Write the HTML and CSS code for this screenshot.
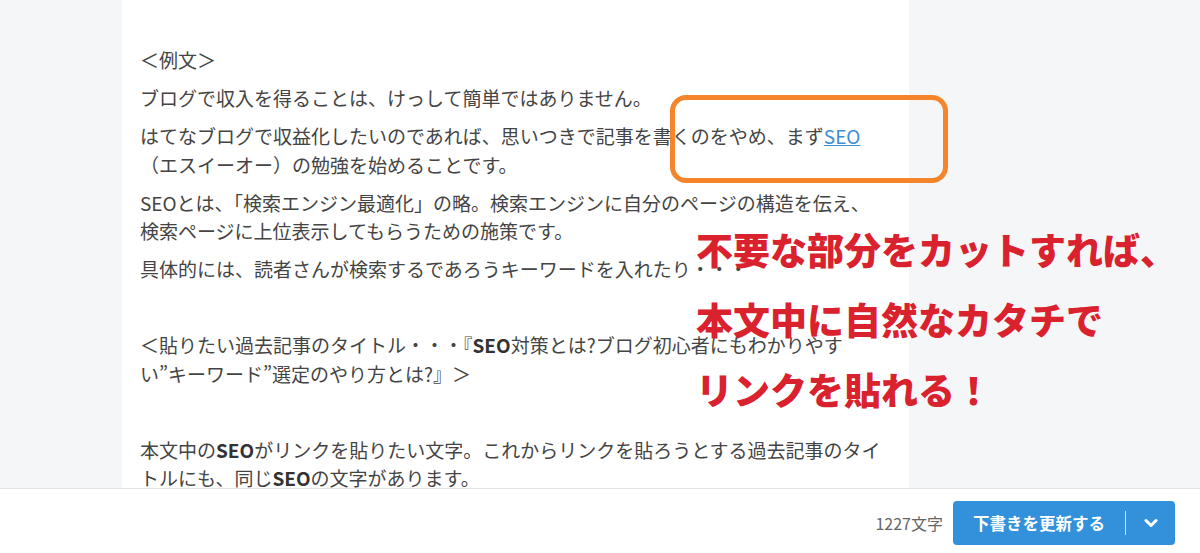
FILE: index.html
```html
<!DOCTYPE html>
<html lang="ja">
<head>
<meta charset="utf-8">
<title>編集</title>
<link rel="stylesheet" href="styles.css">
</head>
<body>
<div class="page">
  <main class="editor-area">
    <article class="editor">
      <p>＜例文＞</p>
      <p>ブログで収入を得ることは、けっして簡単ではありません。</p>
      <p>はてなブログで収益化したいのであれば、思いつきで記事を書くのをやめ、まず<a class="link" href="#">SEO</a><br>（エスイーオー）の勉強を始めることです。</p>
      <p>SEOとは、「検索エンジン最適化」の略。検索エンジンに自分のページの構造を伝え、<br>検索ページに上位表示してもらうための施策です。</p>
      <p>具体的には、読者さんが検索するであろうキーワードを入れたり・・・</p>
      <p class="empty">&nbsp;</p>
      <p>＜貼りたい過去記事のタイトル・・・『<b>SEO</b>対策とは?ブログ初心者にもわかりやす<br>い”キーワード”選定のやり方とは?』＞</p>
      <p class="empty">&nbsp;</p>
      <p>本文中の<b>SEO</b>がリンクを貼りたい文字。これからリンクを貼ろうとする過去記事のタイ<br>トルにも、同じ<b>SEO</b>の文字があります。</p>
    </article>
  </main>
  <footer class="footer">
    <span class="count">1227文字</span>
    <div class="submit">
      <span class="submit-label">下書きを更新する</span>
      <span class="submit-sep"></span>
      <span class="submit-arrow">
        <svg width="14" height="10" viewBox="0 0 14 10"><polyline points="2,2.5 7,7.5 12,2.5" fill="none" stroke="#ffffff" stroke-width="3" stroke-linecap="round" stroke-linejoin="round"/></svg>
      </span>
    </div>
  </footer>
  <div class="highlight-box"></div>
  <div class="callout">
    <div>不要な部分をカットすれば、</div>
    <div>本文中に自然なカタチで</div>
    <div>リンクを貼れる！</div>
  </div>
</div>
</body>
</html>
```

FILE: styles.css
```css
html, body {
  margin: 0;
  padding: 0;
}
body {
  background: #f5f6f8;
  font-family: "Noto Sans CJK JP", "Noto Sans", sans-serif;
  color: #444444;
}
.page {
  position: relative;
  width: 1200px;
  height: 553px;
  overflow: hidden;
  display: flex;
  flex-direction: column;
}
.editor-area {
  height: 488px;
  padding-left: 122px;
}
.editor {
  width: 769px;
  height: 442px;
  background: #ffffff;
  padding: 46px 0 0 18px;
}
.editor p {
  margin: 0 0 9.5px 0;
  font-size: 19px;
  line-height: 28.5px;
  white-space: nowrap;
}
.editor b {
  font-weight: 700;
  color: #333333;
}
.link {
  color: #3d8ed4;
  text-decoration: underline;
}
.footer {
  position: relative;
  height: 65px;
  border-top: 1px solid #e1e4e8;
  background: #ffffff;
  display: flex;
  justify-content: flex-end;
  align-items: center;
  padding: 4px 25px 0 0;
  box-sizing: border-box;
  gap: 10px;
}
.count {
  font-size: 16px;
  color: #666666;
}
.submit {
  height: 44px;
  width: 222px;
  box-sizing: border-box;
  background: #3391dc;
  border-radius: 4px;
  display: flex;
  align-items: center;
  padding-left: 20px;
  color: #ffffff;
}
.submit-label {
  font-size: 16.5px;
  font-weight: 700;
}
.submit-sep {
  width: 1px;
  height: 24px;
  background: rgba(255, 255, 255, 0.75);
  margin-left: 20px;
}
.submit-arrow {
  flex: 1;
  display: flex;
  justify-content: center;
  align-items: center;
}
.highlight-box {
  position: absolute;
  left: 670px;
  top: 95px;
  width: 278px;
  height: 88px;
  box-sizing: border-box;
  border: 5px solid #f5842b;
  border-radius: 16px;
}
.callout {
  position: absolute;
  left: 696px;
  top: 214px;
  color: #d9222d;
  font-size: 37px;
  font-weight: 900;
  line-height: 70px;
  white-space: nowrap;
}
```
